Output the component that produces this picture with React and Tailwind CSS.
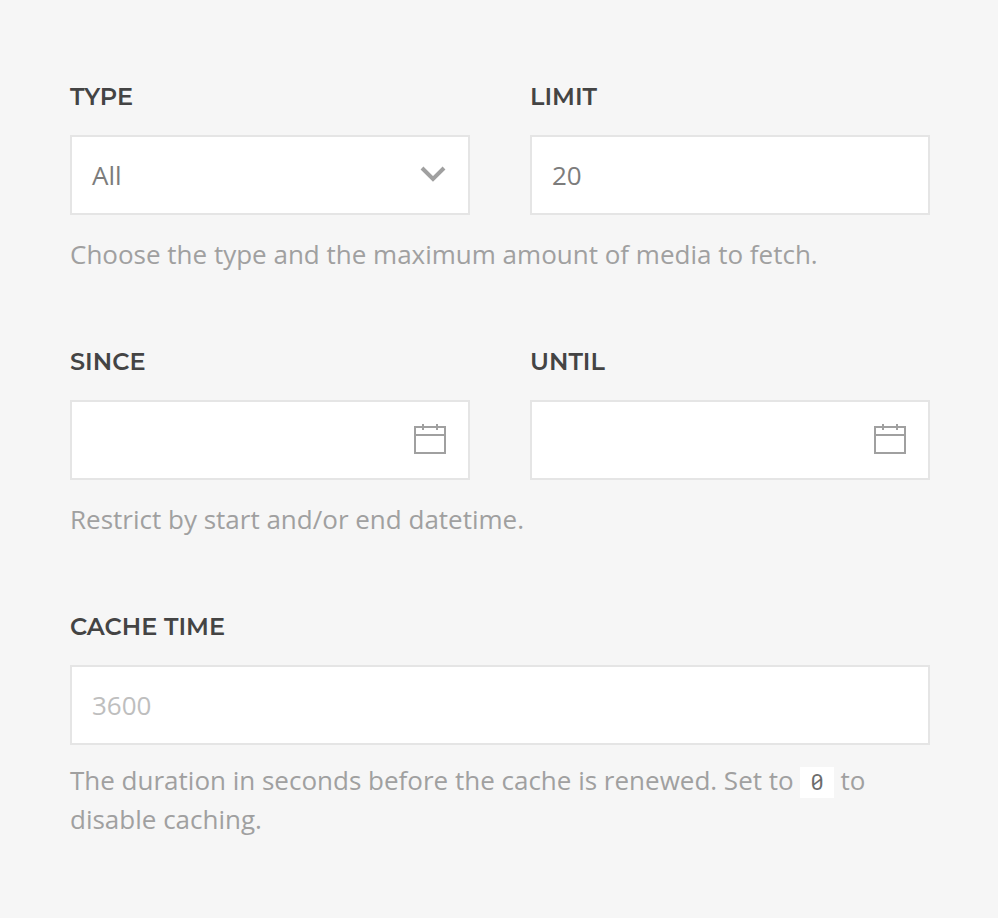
function Label({ children }) {
  return (
    <label className="block h-6 font-[Montserrat,Inter,sans-serif] text-[24px] leading-6 font-semibold text-[#444]">
      {children}
    </label>
  );
}

function Box({ children }) {
  return (
    <div className="mt-[26px] flex h-20 items-center justify-between border-2 border-[#e5e5e5] bg-white pr-[22px] pl-5 text-[#7c7c7c]">
      {children}
    </div>
  );
}

function CalendarIcon() {
  return (
    <svg width="32" height="32" viewBox="0 0 32 32" fill="none" stroke="#a0a0a0" strokeWidth="2" className="-mt-[2px]">
      <path d="M1 4H31V30H1ZM1 12H31M9 1V7M23 1V7" />
    </svg>
  );
}

export default function App() {
  return (
    <main className="h-[918px] w-[998px] bg-[#f6f6f6] px-[70px] pt-[85px] font-['Open_Sans',sans-serif] text-[26px] leading-[39px] text-[#a0a0a0] antialiased">
      <section className="h-[265px] w-[860px]">
        <div className="grid grid-cols-2 gap-[60px]">
          <div>
            <Label>TYPE</Label>
            <Box>
              <span>All</span>
              <svg width="26" height="16" viewBox="0 0 26 16" fill="none" stroke="#a0a0a0" strokeWidth="4" className="-mt-[2px]">
                <path d="M2 2L13 13L24 2" />
              </svg>
            </Box>
          </div>
          <div>
            <Label>LIMIT</Label>
            <Box><span>20</span></Box>
          </div>
        </div>
        <p className="mt-5">Choose the type and the maximum amount of media to fetch.</p>
      </section>
      <section className="h-[265px] w-[860px]">
        <div className="grid grid-cols-2 gap-[60px]">
          <div>
            <Label>SINCE</Label>
            <Box><span /><CalendarIcon /></Box>
          </div>
          <div>
            <Label>UNTIL</Label>
            <Box><span /><CalendarIcon /></Box>
          </div>
        </div>
        <p className="mt-5">Restrict by start and/or end datetime.</p>
      </section>
      <section className="w-[860px]">
        <Label>CACHE TIME</Label>
        <Box><span className="text-[#bebebe]">3600</span></Box>
        <p className="mt-4">
          The duration in seconds before the cache is renewed. Set to{" "}
          <code className="mt-[6px] inline-block h-[31px] bg-white px-[10px] align-top font-['Roboto_Mono','Liberation_Mono',monospace] text-[22px] leading-[29px] text-[#6c6c6c]">0</code>{" "}
          to disable caching.
        </p>
      </section>
    </main>
  );
}
